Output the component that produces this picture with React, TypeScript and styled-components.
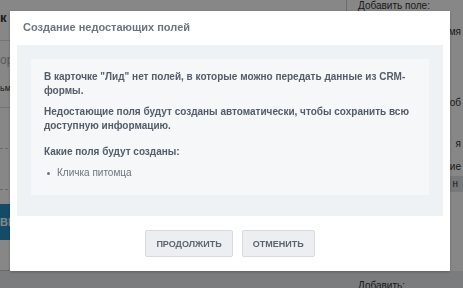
import React from 'react';
import styled, { createGlobalStyle } from 'styled-components';

const GlobalStyle = createGlobalStyle`
  html, body {
    margin: 0;
    padding: 0;
    width: 463px;
    height: 288px;
    overflow: hidden;
    font-family: "Liberation Sans", Arial, sans-serif;
  }
`;

const fields = ['Кличка питомца'];

function App() {
  return (
    <>
      <GlobalStyle />
      <Page>
        <Main>
          <Heading>к</Heading>
          <Divider />
          <Placeholder>ор</Placeholder>
          <Label>ьмы</Label>
          <Divider />
          <Dashed />
          <Dashed />
          <BlueButton>ВИ</BlueButton>
        </Main>
        <Side>
          <SideLabel>Добавить поле:</SideLabel>
          <SideItem>мя</SideItem>
          <SideItem $top={60}>об</SideItem>
          <SideItem $top={30}>я</SideItem>
          <SideItem $top={12}>ие</SideItem>
          <SideBand>н</SideBand>
        </Side>
      </Page>
      <Footer>
        <FooterLabel>Добавить:</FooterLabel>
      </Footer>
      <Overlay>
        <Modal>
          <Title>Создание недостающих полей</Title>
          <Body>
            <Notice>
              <Strong>В карточке "Лид" нет полей, в которые можно передать данные из CRM-формы.</Strong>
              <Strong>Недостающие поля будут созданы автоматически, чтобы сохранить всю доступную информацию.</Strong>
              <Strong $gap={12}>Какие поля будут созданы:</Strong>
              <FieldList>
                {fields.map((f) => (
                  <li key={f}>{f}</li>
                ))}
              </FieldList>
            </Notice>
          </Body>
          <Actions>
            <Button>Продолжить</Button>
            <Button>Отменить</Button>
          </Actions>
        </Modal>
      </Overlay>
    </>
  );
}

export default App;

const Page = styled.div`
  display: grid;
  grid-template-columns: 346px 1fr;
  height: 271px;
  background: #ffffff;
`;
const Main = styled.div`
  display: flex;
  flex-direction: column;
  padding-top: 10px;
  border-bottom: 1px solid #c9ced3;
`;
const Heading = styled.div`
  font-size: 13px;
  font-weight: bold;
  color: #333;
  height: 16px;
  line-height: 16px;
`;
const Divider = styled.div`
  margin-top: 14px;
  border-top: 1px solid #d9dde1;
`;
const Placeholder = styled.div`
  margin-top: 12px;
  font-size: 12px;
  color: #a8adb4;
`;
const Label = styled.div`
  margin-top: 16px;
  font-size: 9px;
  color: #333;
`;
const Dashed = styled.div`
  margin-top: 40px;
  border-top: 1px dashed #c4c9ce;
`;
const BlueButton = styled.div`
  margin-top: 14px;
  height: 36px;
  width: 120px;
  background: #2a8fc4;
  color: #fff;
  font-size: 11px;
  font-weight: bold;
  line-height: 36px;
`;
const Side = styled.div`
  border-left: 1px solid #c9ced3;
  padding-left: 11px;
  display: flex;
  flex-direction: column;
  font-size: 10px;
  color: #6a737f;
`;
const SideLabel = styled.div`
  color: #333;
`;
const SideItem = styled.div<{ $top?: number }>`
  margin-top: ${(p) => p.$top ?? 15}px;
  text-align: right;
  padding-right: 2px;
  color: #333;
`;
const SideBand = styled.div`
  margin: 4px 0 0 -11px;
  background: #dfe3e7;
  height: 16px;
  line-height: 16px;
  text-align: right;
  padding-right: 5px;
  color: #333;
`;
const Footer = styled.div`
  height: 17px;
  background: #e8ebee;
  padding-left: 358px;
`;
const FooterLabel = styled.div`
  padding-top: 9px;
  font-size: 10px;
  color: #333;
`;
const Overlay = styled.div`
  position: fixed;
  inset: 0;
  background: rgba(0, 0, 0, 0.47);
`;
const Modal = styled.div`
  position: absolute;
  left: 10px;
  top: 11px;
  width: 440px;
  height: 260px;
  box-sizing: border-box;
  background: #ffffff;
  box-shadow: 0 1px 3px rgba(0, 0, 0, 0.25);
  display: flex;
  flex-direction: column;
  padding: 0 7px 14px;
`;
const Title = styled.div`
  height: 34px;
  line-height: 32px;
  padding-left: 6px;
  font-size: 11px;
  font-weight: bold;
  color: #6b7480;
`;
const Body = styled.div`
  background: #eef2f4;
  padding: 14px 14px 21px;
  height: 171px;
  box-sizing: border-box;
`;
const Notice = styled.div`
  background: #f5f7f8;
  height: 100%;
  box-sizing: border-box;
  padding: 11px 13px;
`;
const Strong = styled.p<{ $gap?: number }>`
  margin: ${(p) => p.$gap ?? 0}px 0 7px;
  font-size: 10px;
  line-height: 14px;
  font-weight: bold;
  color: #535c69;
`;
const FieldList = styled.ul`
  margin: 6px 0 0;
  padding: 0;
  list-style: none;
  font-size: 10px;
  line-height: 14px;
  color: #6b7480;
  li {
    position: relative;
    padding-left: 13px;
  }
  li::before {
    content: '';
    position: absolute;
    left: 3px;
    top: 6px;
    width: 3px;
    height: 3px;
    border-radius: 50%;
    background: #6b7480;
  }
`;
const Actions = styled.div`
  display: flex;
  justify-content: center;
  gap: 9px;
  margin-top: 14px;
`;
const Button = styled.button`
  height: 27px;
  box-sizing: border-box;
  border: 1px solid #d7dadf;
  border-radius: 2px;
  background: #eceef1;
  font-family: "Liberation Sans", Arial, sans-serif;
  font-size: 9px;
  font-weight: bold;
  text-transform: uppercase;
  color: #5c6470;
  padding: 0 10px;
`;
